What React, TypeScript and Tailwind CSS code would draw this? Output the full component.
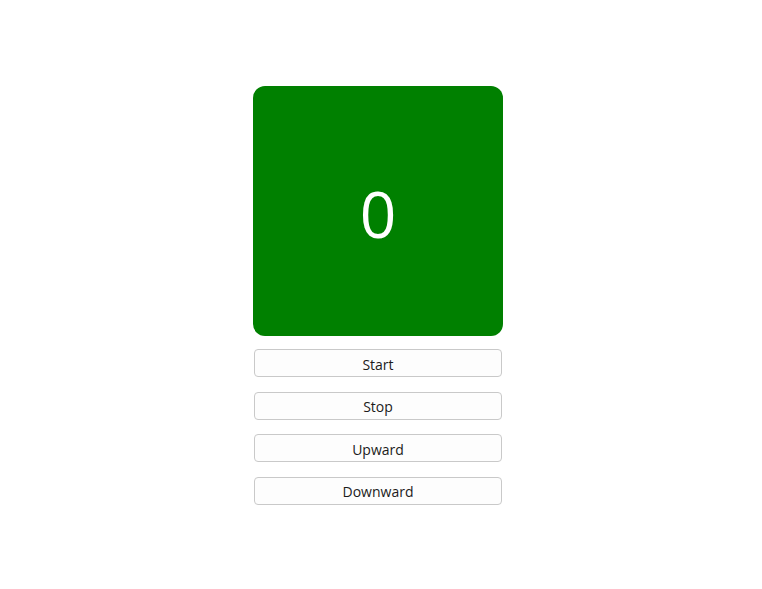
import React, { useEffect, useRef, useState } from "react";

const buttons = ["Start", "Stop", "Upward", "Downward"];

export default function App() {
  const [count, setCount] = useState(0);
  const [running, setRunning] = useState(false);
  const [dir, setDir] = useState(1);
  const timer = useRef<number | null>(null);

  useEffect(() => {
    if (!running) return;
    timer.current = window.setInterval(() => setCount((c) => c + dir), 1000);
    return () => {
      if (timer.current) window.clearInterval(timer.current);
    };
  }, [running, dir]);

  const handleClick = (label: string) => {
    if (label === "Start") setRunning(true);
    if (label === "Stop") setRunning(false);
    if (label === "Upward") setDir(1);
    if (label === "Downward") setDir(-1);
  };

  return (
    <div
      className="flex h-[589px] w-full items-center justify-center bg-white pr-[6px] pt-[2px]"
      style={{ fontFamily: '"Open Sans", "Noto Sans", sans-serif' }}
    >
      <div className="flex w-[250px] flex-col items-center">
        <div className="flex h-[250px] w-[250px] items-center justify-center rounded-[12px] bg-[#008000] pt-[5px] text-[64px] leading-none text-white">
          {count}
        </div>
        <div className="mt-[13px] flex w-full flex-col gap-[14.6px] px-px">
          {buttons.map((label) => (
            <button
              key={label}
              onClick={() => handleClick(label)}
              className="h-[28px] w-full rounded-[4px] border border-[#c9c9c9] bg-[#fdfdfd] pt-[2px] text-[14px] text-[#1b1b1b]"
            >
              {label}
            </button>
          ))}
        </div>
      </div>
    </div>
  );
}
